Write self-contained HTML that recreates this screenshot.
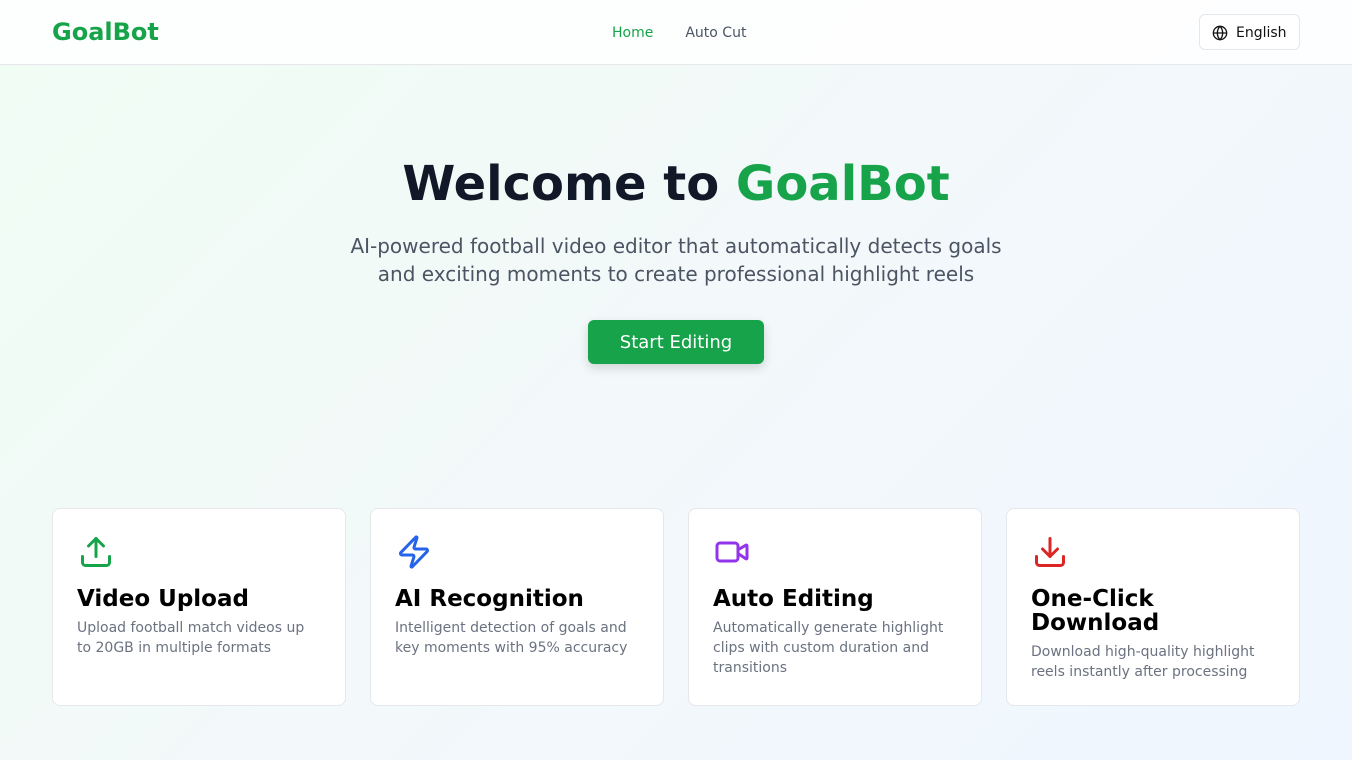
<!DOCTYPE html>
<html><head><meta charset="utf-8"><style>
*{box-sizing:border-box;margin:0;padding:0}
body{width:1352px;height:760px;overflow:hidden;font-family:"DejaVu Sans","Liberation Sans",sans-serif;background:linear-gradient(135deg,#f0fdf4 0%,#f3f8fa 50%,#eff6ff 100%);position:relative}
header{height:65px;background:rgba(255,255,255,.85);border-bottom:1px solid #e5e7eb;position:relative}
.logo{position:absolute;left:52px;top:18px;font-size:24px;font-weight:bold;color:#16a34a}
nav{position:absolute;left:612px;top:25px;font-size:14px}
nav a{color:#4b5563;text-decoration:none;margin-right:32px}
nav a.on{color:#16a34a}
.lang{position:absolute;left:1199px;top:14px;width:101px;height:36px;border:1px solid #e5e7eb;border-radius:6px;background:#fff;font-size:14px;color:#111;display:flex;align-items:center;padding-left:12px;gap:8px;padding-top:1px}
h1{position:absolute;top:152px;width:100%;text-align:center;font-size:48px;font-weight:bold;color:#111827;line-height:64px}
h1 span{color:#16a34a}
.sub{position:absolute;top:232px;width:100%;text-align:center;font-size:20px;line-height:28px;color:#4b5563}
.btn{position:absolute;left:588px;top:320px;width:176px;height:44px;background:#16a34a;color:#fff;border-radius:6px;font-size:18px;display:flex;align-items:center;justify-content:center;box-shadow:0 4px 10px rgba(0,0,0,.15)}
.card{position:absolute;top:508px;width:294px;height:198px;background:#fff;border:1px solid #e5e7eb;border-radius:8px;padding:24px}
.card svg{display:block;margin-left:1px;margin-top:1px}
.card h3{font-size:23px;font-weight:bold;color:#000;line-height:24px;margin-top:17px}
.card p{font-size:14px;color:#6b7280;line-height:20px;margin-top:7px}
</style></head><body>
<header>
<div class="logo">GoalBot</div>
<nav><a class="on">Home</a><a>Auto Cut</a></nav>
<div class="lang"><svg width="16" height="16" viewBox="0 0 24 24" fill="none" stroke="#111" stroke-width="2"><circle cx="12" cy="12" r="10"/><path d="M12 2a14.5 14.5 0 0 0 0 20 14.5 14.5 0 0 0 0-20M2 12h20"/></svg>English</div>
</header>
<h1>Welcome to <span>GoalBot</span></h1>
<div class="sub">AI-powered football video editor that automatically detects goals<br>and exciting moments to create professional highlight reels</div>
<div class="btn">Start Editing</div>

<div class="card" style="left:52px"><svg width="36" height="36" viewBox="0 0 24 24" fill="none" stroke="#16a34a" stroke-width="2" stroke-linecap="round" stroke-linejoin="round"><path d="M21 15v4a2 2 0 0 1-2 2H5a2 2 0 0 1-2-2v-4"/><polyline points="17 8 12 3 7 8"/><line x1="12" y1="3" x2="12" y2="15"/></svg><h3>Video Upload</h3><p>Upload football match videos up to 20GB in multiple formats</p></div>
<div class="card" style="left:370px"><svg width="36" height="36" viewBox="0 0 24 24" fill="none" stroke="#2563eb" stroke-width="2" stroke-linecap="round" stroke-linejoin="round"><path d="M4 14a1 1 0 0 1-.78-1.63l9.9-10.2a.5.5 0 0 1 .86.46l-1.92 6.02A1 1 0 0 0 13 10h7a1 1 0 0 1 .78 1.63l-9.9 10.2a.5.5 0 0 1-.86-.46l1.92-6.02A1 1 0 0 0 11 14z"/></svg><h3>AI Recognition</h3><p>Intelligent detection of goals and key moments with 95% accuracy</p></div>
<div class="card" style="left:688px"><svg width="36" height="36" viewBox="0 0 24 24" fill="none" stroke="#9333ea" stroke-width="2" stroke-linecap="round" stroke-linejoin="round"><path d="m16 13 5.223 3.482a.5.5 0 0 0 .777-.416V7.87a.5.5 0 0 0-.752-.432L16 10.5"/><rect x="2" y="6" width="14" height="12" rx="2"/></svg><h3>Auto Editing</h3><p>Automatically generate highlight clips with custom duration and transitions</p></div>
<div class="card" style="left:1006px"><svg width="36" height="36" viewBox="0 0 24 24" fill="none" stroke="#dc2626" stroke-width="2" stroke-linecap="round" stroke-linejoin="round"><path d="M21 15v4a2 2 0 0 1-2 2H5a2 2 0 0 1-2-2v-4"/><polyline points="7 10 12 15 17 10"/><line x1="12" y1="15" x2="12" y2="3"/></svg><h3>One-Click Download</h3><p>Download high-quality highlight reels instantly after processing</p></div>
</body></html>
